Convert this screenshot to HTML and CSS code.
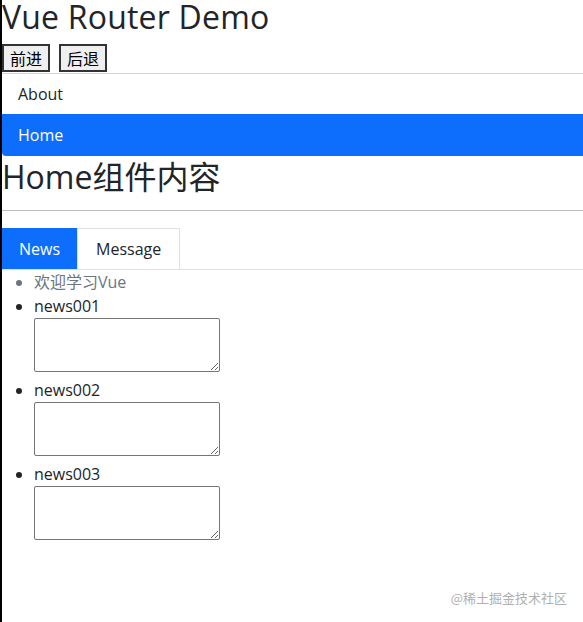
FILE: index.html
```html
<!DOCTYPE html>
<html lang="zh">
<head>
<meta charset="utf-8">
<title>Vue Router Demo</title>
<link rel="stylesheet" href="styles.css">
</head>
<body>
<div class="page">
  <h2 class="title">Vue Router Demo</h2>
  <div class="btns">
    <button class="btn">前进</button>
    <button class="btn">后退</button>
  </div>
  <div class="list-group">
    <a class="list-item">About</a>
    <a class="list-item active">Home</a>
  </div>
  <h2 class="heading">Home组件内容</h2>
  <hr class="rule">
  <div class="tabs">
    <a class="tab active">News</a>
    <a class="tab">Message</a>
  </div>
  <ul class="news">
    <li class="muted">欢迎学习Vue</li>
    <li>news001<br><textarea class="box"></textarea></li>
    <li>news002<br><textarea class="box"></textarea></li>
    <li>news003<br><textarea class="box"></textarea></li>
  </ul>
</div>
<div class="watermark">@稀土掘金技术社区</div>
</body>
</html>
```
FILE: styles.css
```css
html, body {
  margin: 0;
  padding: 0;
  background: #fff;
}
body {
  border-left: 2px solid #000;
  min-height: 622px;
  box-sizing: border-box;
  font-family: "Open Sans", "Noto Sans CJK SC", sans-serif;
  font-size: 16px;
  line-height: 24px;
  color: #212529;
  overflow: hidden;
}
.page {
  display: flex;
  flex-direction: column;
}
.title {
  font-size: 32px;
  font-weight: 400;
  line-height: 33px;
  margin: 0 0 11px;
  letter-spacing: 0.2px;
}
.btns {
  display: flex;
  gap: 9px;
}
.btn {
  font-family: "Noto Sans CJK SC", sans-serif;
  font-size: 16px;
  line-height: 20px;
  padding: 2px 6px;
  border: 2px solid #333;
  background: #efefef;
  color: #000;
  border-radius: 0;
  margin: 0;
}
.list-group {
  display: flex;
  flex-direction: column;
  border-top: 1px solid #d6d6d6;
  margin-top: 1px;
}
.list-item {
  padding: 8px 16px;
  color: #212529;
  line-height: 24px;
}
.list-item.active {
  background: #0d6efd;
  color: #fff;
  padding: 9px 16px 9px;
  border-bottom-left-radius: 4px;
}
.heading {
  font-size: 32px;
  font-weight: 400;
  line-height: 40px;
  margin: 1px 0 0;
  font-family: "Open Sans", "Noto Sans CJK SC", sans-serif;
}
.rule {
  border: 0;
  border-top: 1px solid #bfbfbf;
  margin: 13px 0 17px;
  height: 0;
}
.tabs {
  display: flex;
  border-bottom: 1px solid #dee2e6;
}
.tab {
  padding: 8px 16px;
  border: 1px solid transparent;
  border-bottom: 0;
  color: #212529;
}
.tab.active {
  background: #0d6efd;
  border-color: #0d6efd;
  color: #fff;
}
.tab + .tab {
  border-color: #dee2e6;
  padding: 8px 18px;
}
.news {
  margin: 0;
  padding-left: 32px;
}
.news li {
  line-height: 24px;
}
.muted {
  color: #6c757d;
}
.box {
  box-sizing: border-box;
  width: 186px;
  height: 54px;
  border: 1px solid #767676;
  border-radius: 2px;
  vertical-align: baseline;
  margin: 0;
  font-size: 16px;
}
.watermark {
  position: absolute;
  right: 16px;
  bottom: 16px;
  font-family: "Noto Sans CJK SC", sans-serif;
  font-size: 13px;
  line-height: 16px;
  color: #b0b0b0;
}
```
